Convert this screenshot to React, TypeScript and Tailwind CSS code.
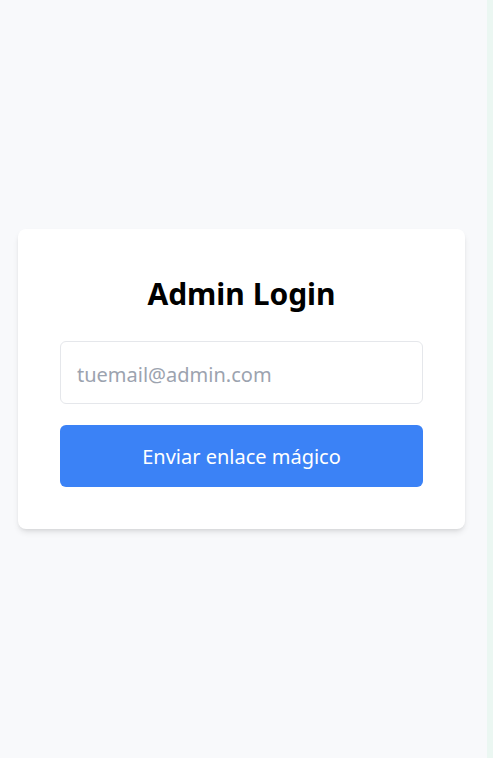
import React, { useState } from "react";

const App = () => {
    const [email, setEmail] = useState("");

    const handleSubmit = (e: React.FormEvent) => {
        e.preventDefault();
    };

    return (
        <div className="flex min-h-screen w-full" style={{ fontFamily: '"Noto Sans", "Open Sans", sans-serif' }}>
            <main className="flex flex-1 items-center justify-center bg-[#f8f9fb] pr-[4px]">
                <div className="w-[447px] rounded-lg bg-white px-[42px] pt-[46px] pb-[42px] shadow-md">
                    <h1 className="mb-[28px] text-center text-[30px] font-bold leading-[38px] text-black">
                        Admin Login
                    </h1>
                    <form onSubmit={handleSubmit}>
                        {/* Email */}
                        <input
                            type="email"
                            placeholder="tuemail@admin.com"
                            className="block h-[63px] w-full rounded-md border border-[#e5e7eb] bg-white px-4 pt-[3px] text-[20px] text-gray-800 placeholder:text-[#9ca3af] focus:outline-none"
                            value={email}
                            onChange={(e) => setEmail(e.target.value)}
                        />
                        <button
                            type="submit"
                            className="mt-[21px] block h-[62px] w-full rounded-md bg-[#3b82f6] pt-[2px] text-[20px] text-white"
                        >
                            Enviar enlace mágico
                        </button>
                    </form>
                </div>
            </main>
            <div className="w-[6px] bg-[#ebf7f2]" />
        </div>
    );
};

export default App;
